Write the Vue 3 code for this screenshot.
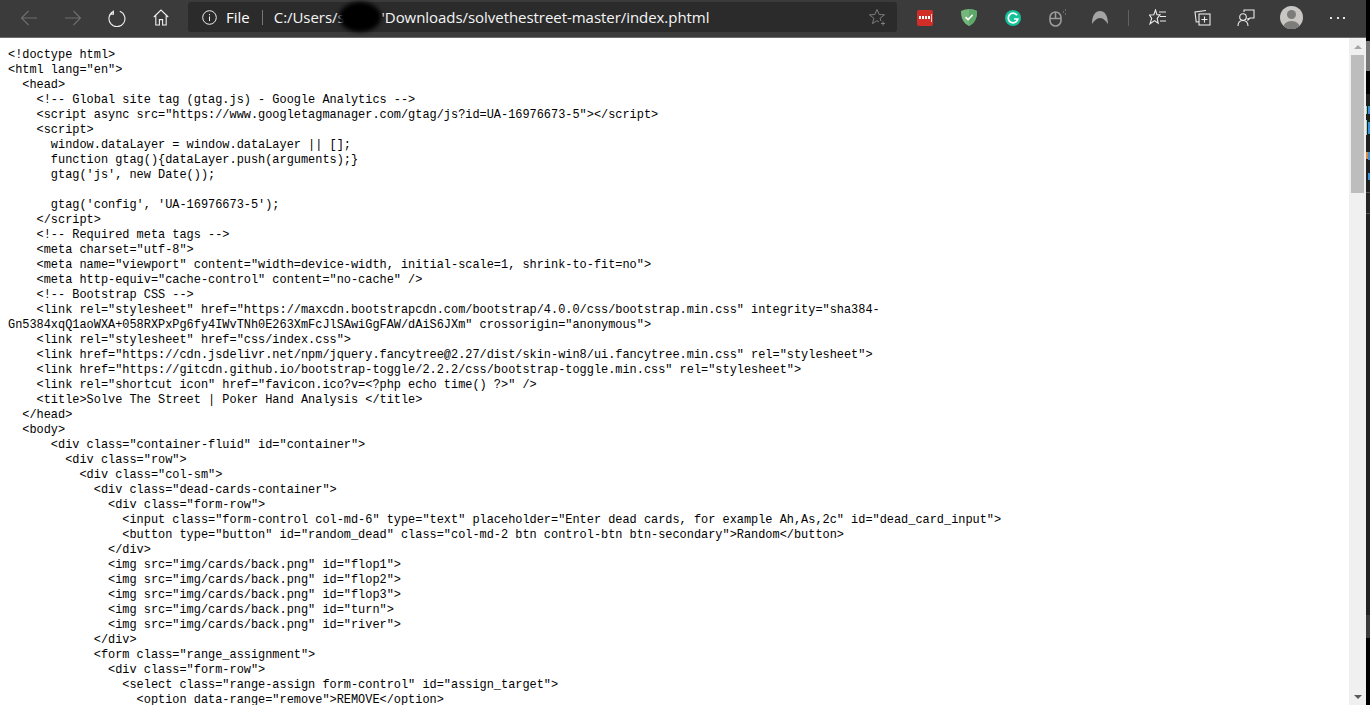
<script setup>
const lines = [
`<!doctype html>`,
`<html lang="en">`,
`  <head>`,
`    <!-- Global site tag (gtag.js) - Google Analytics -->`,
`    <script async src="https://www.googletagmanager.com/gtag/js?id=UA-16976673-5"><\/script>`,
`    <script>`,
`      window.dataLayer = window.dataLayer || [];`,
`      function gtag(){dataLayer.push(arguments);}`,
`      gtag('js', new Date());`,
``,
`      gtag('config', 'UA-16976673-5');`,
`    <\/script>`,
`    <!-- Required meta tags -->`,
`    <meta charset="utf-8">`,
`    <meta name="viewport" content="width=device-width, initial-scale=1, shrink-to-fit=no">`,
`    <meta http-equiv="cache-control" content="no-cache" />`,
`    <!-- Bootstrap CSS -->`,
`    <link rel="stylesheet" href="https://maxcdn.bootstrapcdn.com/bootstrap/4.0.0/css/bootstrap.min.css" integrity="sha384-`,
`Gn5384xqQ1aoWXA+058RXPxPg6fy4IWvTNh0E263XmFcJlSAwiGgFAW/dAiS6JXm" crossorigin="anonymous">`,
`    <link rel="stylesheet" href="css/index.css">`,
`    <link href="https://cdn.jsdelivr.net/npm/jquery.fancytree@2.27/dist/skin-win8/ui.fancytree.min.css" rel="stylesheet">`,
`    <link href="https://gitcdn.github.io/bootstrap-toggle/2.2.2/css/bootstrap-toggle.min.css" rel="stylesheet">`,
`    <link rel="shortcut icon" href="favicon.ico?v=<?php echo time() ?>" />`,
`    <title>Solve The Street | Poker Hand Analysis </title>`,
`  </head>`,
`  <body>`,
`      <div class="container-fluid" id="container">`,
`        <div class="row">`,
`          <div class="col-sm">`,
`            <div class="dead-cards-container">`,
`              <div class="form-row">`,
`                <input class="form-control col-md-6" type="text" placeholder="Enter dead cards, for example Ah,As,2c" id="dead_card_input">`,
`                <button type="button" id="random_dead" class="col-md-2 btn control-btn btn-secondary">Random</button>`,
`              </div>`,
`              <img src="img/cards/back.png" id="flop1">`,
`              <img src="img/cards/back.png" id="flop2">`,
`              <img src="img/cards/back.png" id="flop3">`,
`              <img src="img/cards/back.png" id="turn">`,
`              <img src="img/cards/back.png" id="river">`,
`            </div>`,
`            <form class="range_assignment">`,
`              <div class="form-row">`,
`                <select class="range-assign form-control" id="assign_target">`,
`                  <option data-range="remove">REMOVE</option>`,
]
</script>

<template>
  <div class="page">
    <div class="window">
      <header class="toolbar">
        <div class="nav">
          <button class="tool dim">
            <svg width="18" height="18" viewBox="0 0 18 18"><path d="M17 9H1.500M8.500 2 1.500 9l7 7" /></svg>
          </button>
          <button class="tool dim">
            <svg width="18" height="18" viewBox="0 0 18 18"><path d="M1 9h15.500M9.500 2l7 7-7 7" /></svg>
          </button>
          <button class="tool bright">
            <svg width="18" height="18" viewBox="0 0 18 18"><path d="M5.200 2.100a8 8 0 1 0 6.600-.4M5.400 1v3.600H1.900" transform="translate(0 .5)" /></svg>
          </button>
          <button class="tool bright">
            <svg width="16" height="17" viewBox="0 0 16 17"><path d="M.8 8 8 1l7.200 7M2.800 6.600V16h3.600v-5.400h3.200V16h3.600V6.600" /></svg>
          </button>
        </div>
        <div class="address">
          <svg class="info" width="15" height="15" viewBox="0 0 15 15"><circle cx="7.500" cy="7.500" r="6.800" /><path d="M7.500 6.500V11M7.500 4v1.200" /></svg>
          <span class="scheme">File</span>
          <span class="sep"></span>
          <span class="path">C:/Users/s</span>
          <span class="path rest">'Downloads/solvethestreet-master/index.phtml</span>
          <span class="blob"></span>
          <svg class="fav" width="18" height="18" viewBox="0 0 18 18"><path d="M12 13 11 10.300 15.500 6.800 10.200 6.500 8 1.500 5.800 6.500.5 6.800 4.900 10.300 3.400 15.700 8 12.700 10 14" /><path d="M14 13.500v4M12 15.500h4" /></svg>
        </div>
        <div class="extensions">
          <span class="slot s44"><span class="lastpass"><i></i><i></i><i></i><i></i><b></b></span></span>
          <span class="slot s44"><svg width="16" height="17" viewBox="0 0 16 17"><path d="M8 0c2.500 0 5.500.8 8 2 0 7-2 12-8 15C2 14 0 9 0 2c2.500-1.200 5.500-2 8-2z" fill="#74b77c"/><path d="M8 0c2.500 0 5.500.8 8 2 0 7-2 12-8 15z" fill="#5ea869"/><path d="m4.500 8.200 2.600 2.500 4.500-4.800" fill="none" stroke="#fff" stroke-width="1.600"/></svg></span>
          <span class="slot s44"><span class="grammarly">
            <svg width="16" height="16" viewBox="0 0 16 16"><path d="M12 5.200A4.800 4.800 0 1 0 12.800 9H9" fill="none" stroke="#fff" stroke-width="1.700"/></svg>
          </span></span>
          <span class="slot s43"><svg width="17" height="18" viewBox="0 0 17 18" fill="none" stroke="#9b9b9b" stroke-width="1.600"><rect x="1" y="3" width="11" height="14" rx="5.500"/><path d="M1 9.500h11M6.500 3v6.500"/><path d="M14 3h1M16 1h1M16 5h1" stroke-width="1"/></svg></span>
          <span class="slot s36"><svg width="16" height="13" viewBox="0 0 16 13"><path d="M0 13C0 4 3.500 0 8 0s8 4 8 13c-2-3-5-6-8-6s-6 3-8 6z" fill="#a4a4a4"/></svg></span>
          <span class="divider"></span>
          <span class="slot s45"><svg class="line" width="18" height="17" viewBox="0 0 18 17"><path d="M6.500 1 8 5.800h3l-2.800 3.500 1 5-3.700-2.700-4.500 3.200 1.700-5.400L.5 6l4.300-.2z"/><path d="M10 3h7M11 7.500h6M11 12h6"/></svg></span>
          <span class="slot s43"><svg class="line" width="17" height="17" viewBox="0 0 17 17"><path d="M12 1.500 1 3l1.200 10 2.800-.3"/><rect x="5" y="5" width="11" height="11"/><path d="M10.500 7.500v6M7.500 10.500h6"/></svg></span>
          <span class="slot s43"><svg class="line" width="18" height="18" viewBox="0 0 18 18"><path d="M7 3V1h10v8h-4l-2 2V9"/><circle cx="6" cy="8" r="3.300"/><path d="M1 17c0-3.500 2-5.500 5-5.500s5 2 5 5.500"/></svg></span>
          <span class="avatar"><i></i><b></b></span>
          <span class="more"><i></i><i></i><i></i></span>
        </div>
      </header>
      <main class="content">
        <pre class="code"><div v-for="(line, i) in lines" :key="i" class="row">{{ line || ' ' }}</div></pre>
        <aside class="scrollbar">
          <span class="arrow up"></span>
          <span class="thumb"></span>
          <span class="track"></span>
          <span class="arrow down"></span>
        </aside>
      </main>
    </div>
    <div class="sliver">
      <span class="s1"></span>
      <span class="s2"></span>
      <span class="s3"></span>
      <span class="s4">
        <i class="mint m1"></i><i class="mint m2"></i><i class="orange"></i>
        <i class="blue b1"></i><i class="blue b2"></i><i class="blue b3"></i><i class="blue b4"></i>
      </span>
      <span class="s5"></span>
      <span class="s6"></span>
      <span class="s7"></span>
    </div>
  </div>
</template>

<style>
html, body { margin: 0; background: #fff; overflow: hidden; }
</style>

<style scoped>
.page { display: flex; width: 1370px; height: 705px; overflow: hidden; }
.window { width: 1366px; display: flex; flex-direction: column; }
.toolbar {
  height: 37px; flex: none; display: flex; align-items: center;
  background: #3b3b3b; border-bottom: 1px solid #6b6b6b; box-sizing: content-box;
}
.nav { display: flex; width: 188px; padding-left: 7px; box-sizing: border-box; flex: none; }
.tool { width: 44px; height: 30px; background: none; border: 0; padding: 0; display: flex; align-items: center; justify-content: center; margin-top: -2px; }
.tool svg { fill: none; stroke-width: 1.100; }
.dim svg { stroke: #6f6f6f; }
.bright svg { stroke: #f0f0f0; }
.address {
  position: relative; width: 709px; height: 30px; margin-top: -3px; background: #2b2b2b; border-radius: 3px;
  display: flex; align-items: center; flex: none; color: #fff;
  font: 15px "Open Sans", "Noto Sans", sans-serif; white-space: nowrap; box-sizing: border-box;
}
.info { margin-left: 14px; fill: none; stroke: #eee; stroke-width: 1; }
.scheme { margin-left: 9px; }
.sep { width: 1px; height: 15px; background: #777; margin: 0 11px 0 12px; }
.path { letter-spacing: -.05px; color: #f5f5f5; }
.rest { margin-left: 37px; }
.blob {
  position: absolute; left: 151px; top: 0; width: 42px; height: 30px; border-radius: 50%;
  background: #000; filter: blur(2px);
}
.fav { position: absolute; left: 681px; top: 6px; fill: none; stroke: #7d7d7d; stroke-width: 1; }
.extensions { flex: 1; display: flex; align-items: center; margin-top: -2px; height: 30px; padding-left: 20px; box-sizing: border-box; }
.slot { flex: none; display: flex; align-items: center; }
.s36 { width: 36px; }
.s43 { width: 43px; }
.s44 { width: 44px; }
.s45 { width: 45px; }
.line { fill: none; stroke: #ececec; stroke-width: 1.100; }
.lastpass { width: 16px; height: 16px; background: #d32d27; border-radius: 2px; display: flex; align-items: center; gap: 1px; padding-left: 2px; box-sizing: border-box; }
.lastpass i { width: 2px; height: 3px; background: #fff; }
.lastpass b { width: 1px; height: 8px; background: #f3c8c6; }
.grammarly { width: 16px; height: 16px; border-radius: 50%; background: #15c39a; display: block; }
.grammarly svg { display: block; }
.divider { width: 1px; height: 16px; background: #616161; margin-right: 20px; flex: none; }
.avatar { position: relative; width: 23px; height: 23px; border-radius: 50%; background: #c9c7c4; overflow: hidden; flex: none; }
.avatar i { position: absolute; left: 7px; top: 4px; width: 9px; height: 9px; border-radius: 50%; background: #7c7c7a; }
.avatar b { position: absolute; left: 3px; top: 15px; width: 17px; height: 14px; border-radius: 50%; background: #7c7c7a; }
.more { display: flex; gap: 4.500px; margin-left: 27px; }
.more i { width: 2px; height: 2px; background: #e5e5e5; }
.content { flex: 1; min-height: 0; display: flex; background: #fff; }
.code {
  flex: 1; min-width: 0; margin: 0; padding: 10px 0 0 8px; overflow: hidden; color: #000;
  font: 11.915px/15px "Liberation Mono", monospace;
}
.row { height: 15px; white-space: pre; }
.scrollbar { width: 17px; flex: none; background: #f0f0f0; display: flex; flex-direction: column; align-items: center; }
.arrow { width: 0; height: 0; flex: none; border-left: 4px solid transparent; border-right: 4px solid transparent; }
.up { margin: 7px 0 6px; border-bottom: 4px solid #a6a6a6; }
.thumb { width: 13px; height: 138px; flex: none; background: #bdbdbd; }
.track { flex: 1; }
.down { margin-bottom: 6px; border-top: 4px solid #5a5a5a; }
.sliver { width: 4px; flex: none; display: flex; flex-direction: column; background: #000; }
.sliver span { display: block; flex: none; position: relative; }
.s1 { height: 41px; background: #000; }
.s2 { height: 30px; background: #777; }
.s3 { height: 23px; background: #000; }
.s4 { height: 98px; background: #1f1f1f; }
.s5 { height: 21px; background: #242424; border-top: 1px solid #555; box-sizing: border-box; }
.s6 { height: 402px; background: #222; border-top: 1px solid #555; box-sizing: border-box; }
.s7 { height: 23px; background: #3a3a3a; }
.sliver i { position: absolute; }
.mint { left: 0; width: 1px; background: #8fdfd0; }
.m1 { top: 12px; height: 8px; }
.m2 { top: 26px; height: 15px; }
.orange { left: 0; top: 58px; width: 2px; height: 7px; background: #d98a3a; }
.blue { left: 2px; width: 2px; background: #3f8fd8; }
.b1 { top: 12px; height: 8px; }
.b2 { top: 28px; height: 12px; }
.b3 { top: 58px; height: 8px; }
.b4 { top: 79px; height: 7px; }
</style>
